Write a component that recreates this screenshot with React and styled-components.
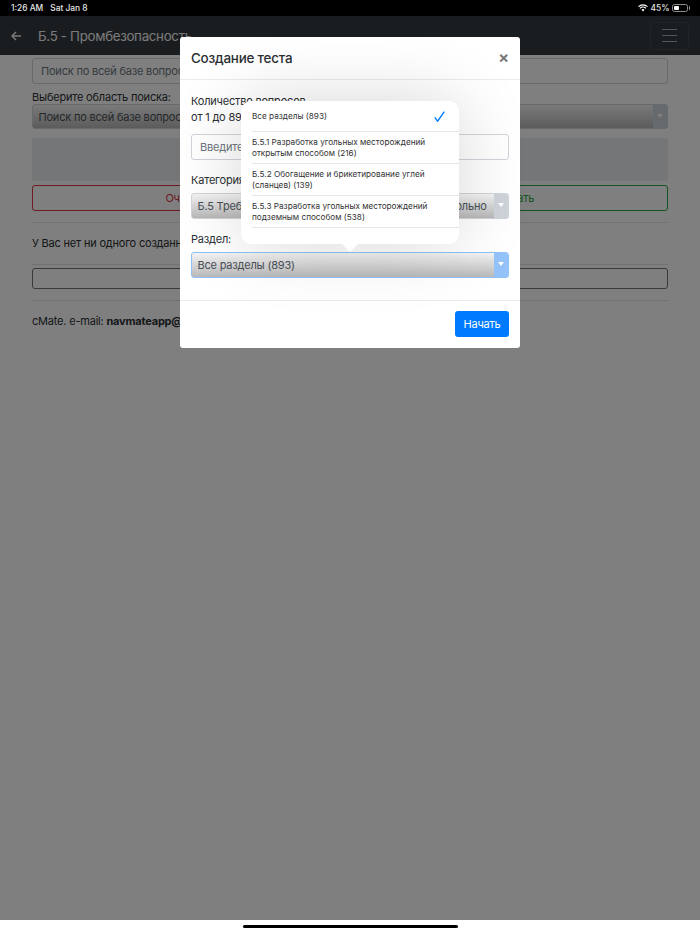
import React from 'react';
import styled, { createGlobalStyle } from 'styled-components';

const GlobalStyle = createGlobalStyle`
  html, body {
    margin: 0;
    height: 934px;
    overflow: hidden;
    background: #fff;
    font-family: Inter, "Liberation Sans", sans-serif;
  }
  * { box-sizing: border-box; }
`;

const Screen = styled.div`
  position: relative;
  display: flex;
  flex-direction: column;
  width: 700px;
  height: 934px;
  color: #2b2f33;
  font-size: 11px;
  letter-spacing: -0.2px;
`;

const StatusBar = styled.div`
  position: relative;
  z-index: 3;
  display: flex;
  align-items: center;
  justify-content: space-between;
  height: 16px;
  padding: 0 11px;
  background: #000;
  color: #e6e6e6;
  font-size: 8.4px;
  font-weight: 500;
  letter-spacing: 0;
`;

const StatusGroup = styled.div`
  display: flex;
  align-items: center;
  gap: 7px;
`;

const StatusRight = styled(StatusGroup)`
  gap: 2.5px;
`;

const Nav = styled.div`
  display: flex;
  align-items: center;
  height: 39px;
  padding: 0 11px;
  background: #343a40;
  color: #f4f4f4;
`;

const NavTitle = styled.div`
  margin-left: 17px;
  font-size: 13.3px;
  letter-spacing: -0.3px;
  white-space: nowrap;
`;

const Toggler = styled.div`
  display: flex;
  flex-direction: column;
  justify-content: center;
  gap: 4.6px;
  width: 39px;
  height: 28px;
  margin-left: auto;
  padding: 0 11px;
  border: 1px solid #42474d;
  border-radius: 3px;
`;

const TogglerLine = styled.span`
  display: block;
  height: 1.2px;
  background: #a9abad;
`;

const Main = styled.div`
  flex: 1;
  padding: 3px 32px 0;
  background: #fff;
`;

const Field = styled.div`
  display: flex;
  align-items: center;
  height: 26px;
  padding: 0 8px;
  border: 1px solid #ced4da;
  border-radius: 3px;
  background: #fff;
  color: #6c757d;
  white-space: nowrap;
  overflow: hidden;
`;

const AreaLabel = styled.div`
  margin-top: 6px;
  line-height: 14px;
`;

const Select = styled.div`
  position: relative;
  display: flex;
  align-items: center;
  height: ${(p) => p.$height || 26}px;
  margin-top: ${(p) => p.$top || 0}px;
  padding: 0 5.5px;
  border: 1px solid ${(p) => (p.$focus ? '#8fc1f7' : '#ced4da')};
  border-radius: 3px;
  background: linear-gradient(#f4f4f4, #b8b8b8);
  color: #495057;
  white-space: nowrap;
  overflow: hidden;
`;

const SelectArrow = styled.span`
  position: absolute;
  top: 0;
  right: 0;
  bottom: 0;
  width: 14px;
  background: ${(p) => (p.$focus ? '#94c3fa' : '#ced4da')};

  &::before {
    content: '';
    position: absolute;
    top: 9px;
    left: 4px;
    border-left: 3px solid transparent;
    border-right: 3px solid transparent;
    border-top: 4px solid #fff;
  }
`;

const StatsPanel = styled.div`
  height: 43px;
  margin-top: 9px;
  border-radius: 3px;
  background: #e9ecef;
`;

const ActionRow = styled.div`
  display: grid;
  grid-template-columns: 1fr 1fr;
  gap: 4px;
  margin-top: 4px;
`;

const OutlineButton = styled.div`
  display: flex;
  align-items: center;
  justify-content: center;
  height: 26px;
  border: 1px solid ${(p) => p.$color};
  border-radius: 3px;
  color: ${(p) => p.$color};
`;

const Rule = styled.hr`
  margin: ${(p) => p.$top}px 0 ${(p) => p.$bottom}px;
  border: 0;
  border-top: 1px solid #e2e3e5;
`;

const Note = styled.div`
  line-height: 14px;
`;

const WideButton = styled.div`
  height: 21px;
  border: 1px solid #6c757d;
  border-radius: 3px;
`;

const Backdrop = styled.div`
  position: absolute;
  z-index: 1;
  inset: 0;
  background: rgba(0, 0, 0, 0.5);
`;

const Modal = styled.div`
  position: absolute;
  z-index: 2;
  top: 37px;
  left: 180px;
  width: 340px;
  height: 311px;
  border-radius: 3px;
  background: #fff;
  overflow: hidden;
`;

const ModalHeader = styled.div`
  display: flex;
  align-items: center;
  justify-content: space-between;
  height: 43px;
  padding: 0 11px;
  border-bottom: 1px solid #e9ecef;
`;

const ModalTitle = styled.div`
  font-size: 13.4px;
  font-weight: 500;
  letter-spacing: -0.2px;
`;

const CloseMark = styled.div`
  margin-top: -3px;
  color: #7a7a7a;
  font-size: 16px;
  font-weight: 700;
  line-height: 1;
`;

const ModalBody = styled.div`
  height: 221px;
  padding: 13px 11px 0;
  border-bottom: 1px solid #e9ecef;
`;

const FieldLabel = styled.div`
  margin-top: ${(p) => p.$top || 0}px;
  line-height: 16px;
`;

const ModalInput = styled(Field)`
  margin-top: 9px;
`;

const ModalFooter = styled.div`
  display: flex;
  justify-content: flex-end;
  padding: 10px 11px 0;
`;

const StartButton = styled.div`
  display: flex;
  align-items: center;
  justify-content: center;
  width: 54px;
  height: 26px;
  border-radius: 3px;
  background: #007bff;
  color: #fff;
`;

const Popover = styled.div`
  position: absolute;
  z-index: 4;
  top: 101px;
  left: 241px;
  width: 218px;
  height: 143px;
  padding-left: 11px;
  border-radius: 10px;
  background: #fff;
  color: #333;
  font-size: 8.2px;
  line-height: 10.6px;
  letter-spacing: 0;
  box-shadow: 0 0 70px rgba(0, 0, 0, 0.16);

  &::after {
    content: '';
    position: absolute;
    top: 143px;
    left: 101px;
    border-left: 8px solid transparent;
    border-right: 8px solid transparent;
    border-top: 8px solid #fff;
  }
`;

const Option = styled.div`
  display: flex;
  align-items: center;
  justify-content: space-between;
  height: ${(p) => p.$height || 32}px;
  padding-right: 14px;
  border-bottom: 1px solid #e6e6e6;
`;

const HomeStrip = styled.div`
  position: relative;
  z-index: 3;
  display: flex;
  justify-content: center;
  height: 14px;
  padding-top: 5px;
  background: #fff;
`;

const HomeBar = styled.div`
  width: 215px;
  height: 3px;
  border-radius: 2px;
  background: #000;
`;

const BatteryShell = styled.div`
  position: relative;
  display: flex;
  width: 16px;
  height: 8px;
  margin-right: 1px;
  padding: 1px;
  border: 1px solid #8f8f8f;
  border-radius: 2.5px;

  &::after {
    content: '';
    position: absolute;
    top: 1px;
    right: -2.5px;
    width: 1px;
    height: 4px;
    border-radius: 0 1px 1px 0;
    background: #8f8f8f;
  }
`;

const BatteryFill = styled.span`
  display: block;
  width: 45%;
  border-radius: 1px;
  background: #fff;
`;

const App = () => (
  <Screen>
    <GlobalStyle />
    <StatusBar>
      <StatusGroup>
        <span>1:26 AM</span>
        <span>Sat Jan 8</span>
      </StatusGroup>
      <StatusRight>
        <svg width="10" height="8" viewBox="0 0 10 8">
          <path d="M5 7.6 3.4 5.8a2.4 2.4 0 0 1 3.2 0z" fill="#fff" />
          <path d="M1.9 4.3a4.5 4.5 0 0 1 6.2 0M.5 2.6a6.6 6.6 0 0 1 9 0" fill="none" stroke="#fff" strokeWidth="1.1" />
        </svg>
        <span>45%</span>
        <BatteryShell>
          <BatteryFill />
        </BatteryShell>
      </StatusRight>
    </StatusBar>
    <Nav>
      <svg width="10" height="10" viewBox="0 0 10 10" fill="none" stroke="#f4f4f4" strokeWidth="1.5">
        <path d="M10 5H1M5 1 1 5l4 4" />
      </svg>
      <NavTitle>Б.5 - Промбезопасность</NavTitle>
      <Toggler>
        <TogglerLine />
        <TogglerLine />
        <TogglerLine />
      </Toggler>
    </Nav>
    <Main>
      <Field>Поиск по всей базе вопросов</Field>
      <AreaLabel>Выберите область поиска:</AreaLabel>
      <Select $height={25}>
        Поиск по всей базе вопросов
        <SelectArrow />
      </Select>
      <StatsPanel />
      <ActionRow>
        <OutlineButton $color="#dc3545">Очистить</OutlineButton>
        <OutlineButton $color="#28a745">Показать</OutlineButton>
      </ActionRow>
      <Rule $top={11} $bottom={13} />
      <Note>У Вас нет ни одного созданного теста</Note>
      <Rule $top={14} $bottom={3} />
      <WideButton />
      <Rule $top={11} $bottom={13} />
      <Note>
        cMate. e-mail: <b>navmateapp@gmail.com</b>
      </Note>
    </Main>
    <HomeStrip>
      <HomeBar />
    </HomeStrip>
    <Backdrop />
    <Modal>
      <ModalHeader>
        <ModalTitle>Создание теста</ModalTitle>
        <CloseMark>×</CloseMark>
      </ModalHeader>
      <ModalBody>
        <FieldLabel>Количество вопросов</FieldLabel>
        <FieldLabel>от 1 до 893</FieldLabel>
        <ModalInput>Введите количество вопросов</ModalInput>
        <FieldLabel $top={12}>Категория:</FieldLabel>
        <Select $top={5}>
          Б.5 Требования промбезопасности - Тест произвольно
          <SelectArrow />
        </Select>
        <FieldLabel $top={12}>Раздел:</FieldLabel>
        <Select $top={5} $focus>
          Все разделы (893)
          <SelectArrow $focus />
        </Select>
      </ModalBody>
      <ModalFooter>
        <StartButton>Начать</StartButton>
      </ModalFooter>
    </Modal>
    <Popover>
      <Option $height={31}>
        Все разделы (893)
        <svg width="11" height="11" viewBox="0 0 11 11" fill="none" stroke="#007aff" strokeWidth="1.4">
          <path d="M.7 6.3 3.6 10.2 10.3.6" />
        </svg>
      </Option>
      <Option>
        <span>
          Б.5.1 Разработка угольных месторождений
          <br />
          открытым способом (216)
        </span>
      </Option>
      <Option>
        <span>
          Б.5.2 Обогащение и брикетирование углей
          <br />
          (сланцев) (139)
        </span>
      </Option>
      <Option>
        <span>
          Б.5.3 Разработка угольных месторождений
          <br />
          подземным способом (538)
        </span>
      </Option>
    </Popover>
  </Screen>
);

export default App;
